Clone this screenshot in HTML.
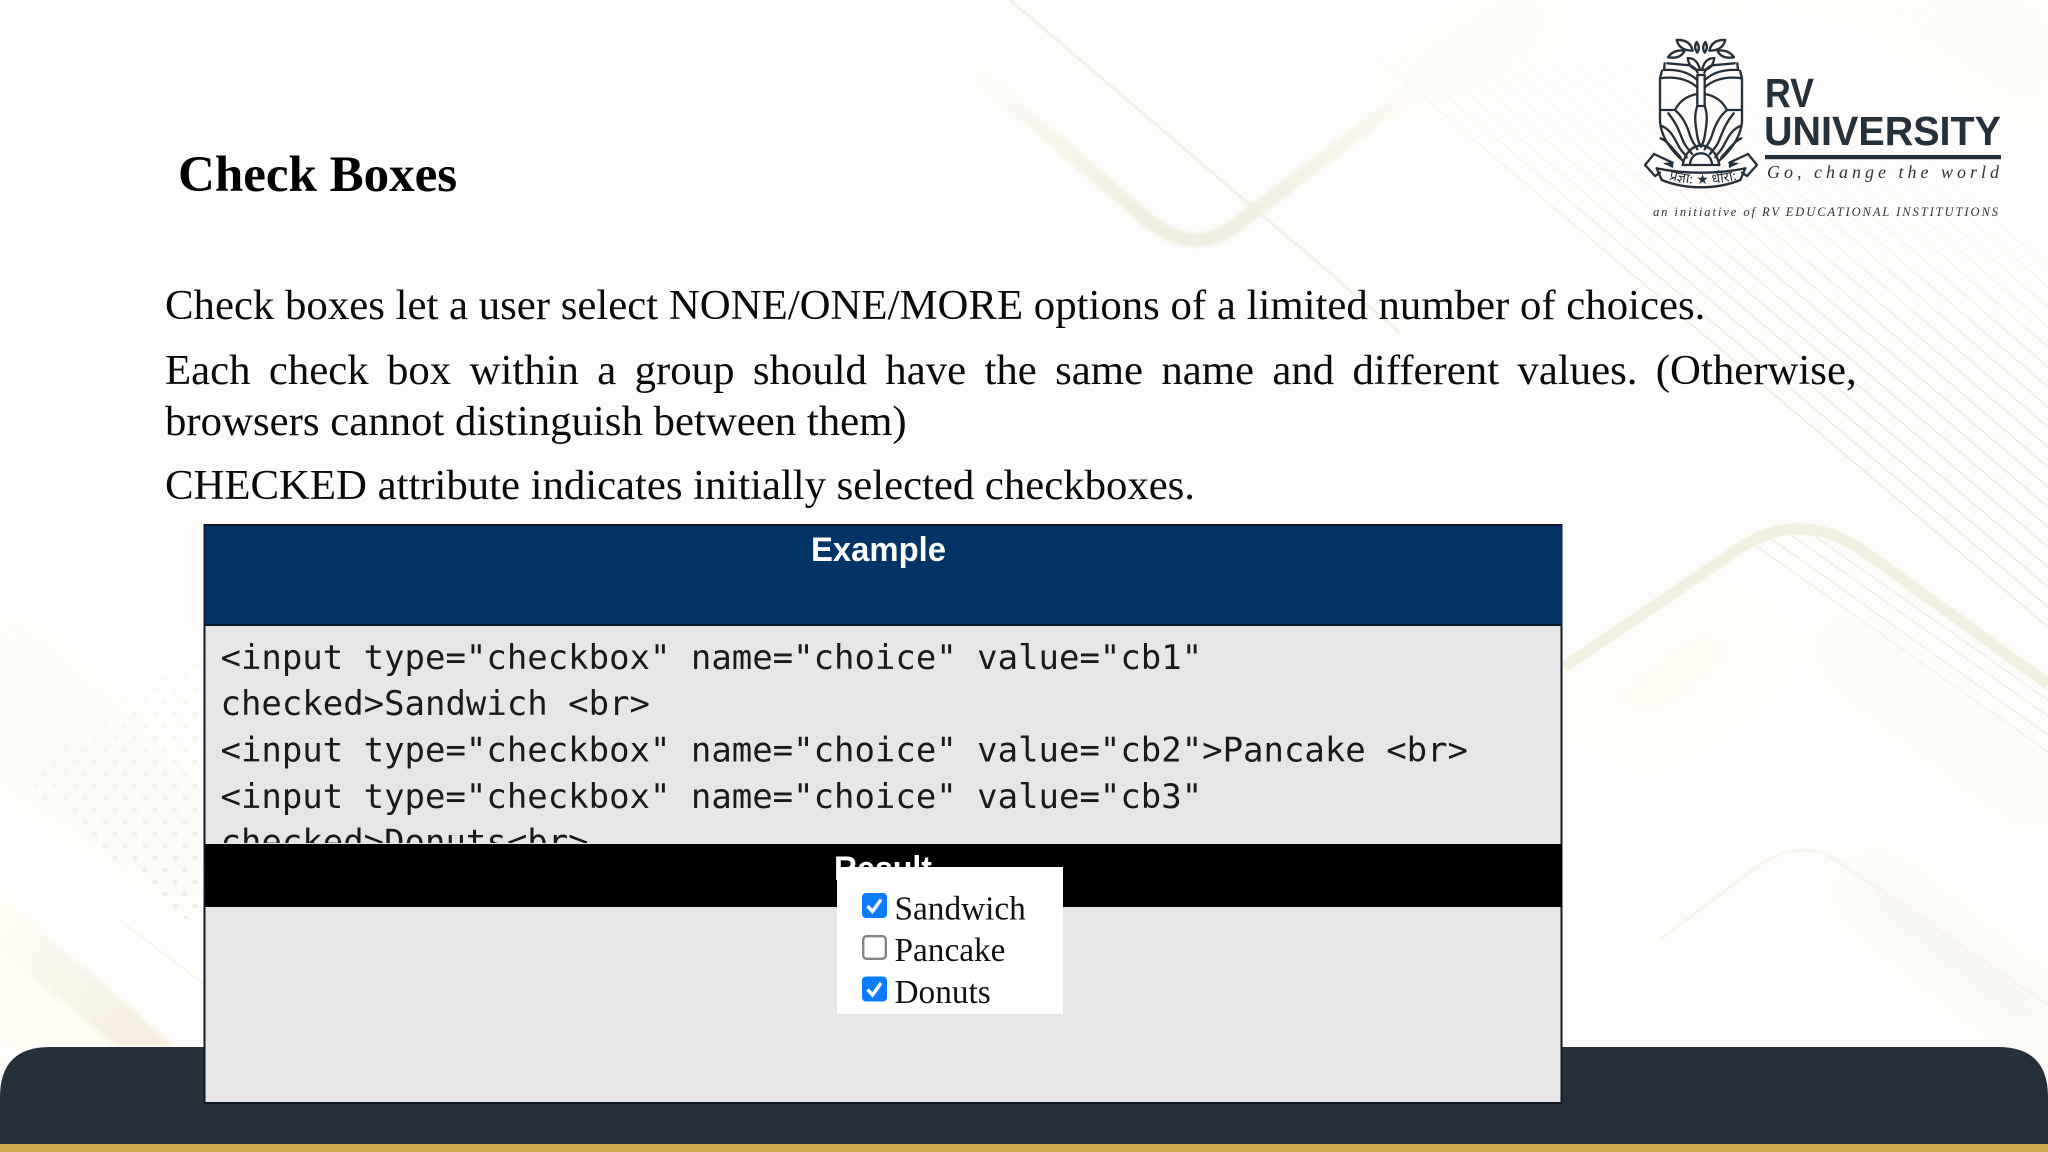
<!DOCTYPE html>
<html lang="en"><head><meta charset="utf-8"><title>Check Boxes</title>
<style>
html,body{margin:0;padding:0;background:#fdfcfa;}
svg{display:block;position:absolute;left:0;top:0;}
.b{font-family:"Liberation Serif",serif;font-size:42.8px;fill:#0a0a0a;}
.m{font-family:"DejaVu Sans Mono",monospace;font-size:33.97px;fill:#1a1a1a;}
.h{font-family:"Liberation Sans",sans-serif;font-weight:bold;font-size:34px;fill:#fff;}
.l{font-family:"Liberation Serif",serif;font-size:33.3px;fill:#111;}
</style></head>
<body style="width:2048px;height:1152px;overflow:hidden;position:relative">
<svg width="2048" height="1152" viewBox="0 0 2048 1152" xmlns="http://www.w3.org/2000/svg">
<defs>
<filter id="b3" x="-20%" y="-20%" width="140%" height="140%"><feGaussianBlur stdDeviation="1.8"/></filter>
<filter id="b2" x="-20%" y="-20%" width="140%" height="140%"><feGaussianBlur stdDeviation="2"/></filter>
<filter id="b1" x="-20%" y="-20%" width="140%" height="140%"><feGaussianBlur stdDeviation="0.7"/></filter>
<filter id="b20" x="-30%" y="-30%" width="160%" height="160%"><feGaussianBlur stdDeviation="22"/></filter>
<pattern id="dots" x="0" y="0" width="20" height="24" patternUnits="userSpaceOnUse">
<circle cx="5" cy="6" r="2.5" fill="#f1eee3"/><circle cx="15" cy="18" r="2.5" fill="#f1eee3"/>
</pattern>
<linearGradient id="fadeDots" gradientUnits="userSpaceOnUse" x1="60" y1="670" x2="170" y2="890"><stop offset="0" stop-color="#fff" stop-opacity="0"/><stop offset=".9" stop-color="#fff" stop-opacity="1"/></linearGradient>
<mask id="dm"><path d="M20 780 L210 640 V935 H205 Z" fill="url(#fadeDots)"/></mask>
<clipPath id="codeclip"><rect x="207" y="627" width="1354" height="216"/></clipPath>
<linearGradient id="fadeLines" gradientUnits="userSpaceOnUse" x1="1700" y1="60" x2="1640" y2="330"><stop offset="0" stop-color="#fff" stop-opacity="0"/><stop offset="1" stop-color="#fff" stop-opacity="1"/></linearGradient>
<mask id="lm"><path d="M1380 60H2048V780L1900 690L1640 480L1500 240Z" fill="url(#fadeLines)"/></mask>
<linearGradient id="band" gradientUnits="userSpaceOnUse" x1="20" y1="900" x2="165" y2="1047"><stop offset="0" stop-color="#f7f1e2" stop-opacity="0"/><stop offset=".8" stop-color="#f6f0e0"/><stop offset="1" stop-color="#f6f0e0"/></linearGradient>
<linearGradient id="vgrad" gradientUnits="userSpaceOnUse" x1="0" y1="70" x2="0" y2="225"><stop offset="0" stop-color="#fbf9ef" stop-opacity=".3"/><stop offset=".55" stop-color="#f7f4e8"/><stop offset="1" stop-color="#f1ede0"/></linearGradient>
</defs>

<!-- background -->
<rect width="2048" height="1152" fill="#fdfcfa"/>
<path d="M0 890 L0 1047 H130 Z" fill="#fffdf4" filter="url(#b2)"/>
<path d="M0 895 L175 1047 H118 L0 950 Z" fill="url(#band)" filter="url(#b2)"/>
<path d="M0 620 L130 740 L210 820 V900 L60 810 L0 760 Z" fill="#fbfaf5" filter="url(#b20)"/>
<rect x="0" y="640" width="210" height="300" fill="url(#dots)" mask="url(#dm)"/>
<path d="M120 920 L205 985" stroke="#f3f1ea" stroke-width="1.2" fill="none"/>
<path d="M1620 0 L2048 0 L2048 120 L1880 10 Z" fill="#fdfbf5" filter="url(#b20)"/>
<path d="M1560 700 L1700 590 L1790 650 L1650 760Z" fill="#fefcf5" filter="url(#b20)"/>

<!-- thin diagonal -->
<path d="M1010 0 L1296 244 L1400 333" stroke="#f2f0e1" stroke-width="2.6" fill="none" filter="url(#b1)"/>
<!-- thick V -->
<path d="M977 73 L1150 222 Q1198 258 1240 222 L1410 93" stroke="url(#vgrad)" stroke-width="14" fill="none" filter="url(#b3)"/>
<path d="M1410 93 L1540 10" stroke="#fbf9f0" stroke-width="24" fill="none" filter="url(#b20)"/>
<!-- fine lines -->
<g mask="url(#lm)" stroke="#ece9dc" stroke-width="1.2" fill="none">
<path d="M1380 60 L2048 627M1404 60 L2048 607M1428 60 L2048 587M1452 60 L2048 567M1476 60 L2048 547M1500 60 L2048 527M1524 60 L2048 507M1548 60 L2048 487M1572 60 L2048 467M1596 60 L2048 447M1620 60 L2048 427M1644 60 L2048 407M1668 60 L2048 387M1692 60 L2048 367M1716 60 L2048 347M1740 60 L2048 327M1764 60 L2048 307M1788 60 L2048 287M1812 60 L2048 267"/>
</g>
<!-- upper chevron -->
<path d="M1564 667 L1728 556 Q1794 505 1862 550 L2048 684" stroke="#f3efe1" stroke-width="11" fill="none" filter="url(#b1)"/>
<g stroke="#f1eee4" stroke-width="1.2" fill="none">
<path d="M1748 540 L2048 752M1763 533 L2048 735M1781 528 L2048 716M1803 528 L2048 700M1843 540 L2048 690"/>
</g>
<path d="M1840 640 L2048 800" stroke="#faf8f1" stroke-width="30" fill="none" filter="url(#b20)"/>
<!-- lower chevron -->
<path d="M1660 940 L1755 868 Q1794 840 1830 856 L2048 1005" stroke="#f6f3e9" stroke-width="2.4" fill="none" filter="url(#b1)"/>
<path d="M1860 880 L2048 1030" stroke="#f9f6ed" stroke-width="30" fill="none" filter="url(#b20)"/>

<!-- bottom bar -->
<path d="M0 1152 V1097 Q0 1047 50 1047 H1998 Q2048 1047 2048 1097 V1152 Z" fill="#25303a"/>
<rect x="0" y="1144" width="2048" height="8" fill="#cfab50"/>

<!-- title -->
<text x="178" y="191" font-family="Liberation Serif,serif" font-weight="bold" font-size="51" fill="#000">Check Boxes</text>

<!-- body -->
<text class="b" x="165" y="319">Check boxes let a user select NONE/ONE/MORE options of a limited number of choices.</text>
<text class="b" x="165" y="384" style="word-spacing:7.65px">Each check box within a group should have the same name and different values. (Otherwise,</text>
<text class="b" x="165" y="435">browsers cannot distinguish between them)</text>
<text class="b" x="165" y="499" textLength="1030">CHECKED attribute indicates initially selected checkboxes.</text>

<!-- example box -->
<rect x="204.5" y="525" width="1357" height="578" fill="#e6e6e6" stroke="#111a24" stroke-width="2"/>
<rect x="205" y="526" width="1357" height="99" fill="#003366"/>
<rect x="205" y="624" width="1357" height="2" fill="#0a1a2a"/>
<text class="h" x="811" y="561" textLength="135" lengthAdjust="spacingAndGlyphs">Example</text>
<g clip-path="url(#codeclip)">
<text class="m" x="220.5" y="669">&lt;input type="checkbox" name="choice" value="cb1"</text>
<text class="m" x="220.5" y="715">checked&gt;Sandwich &lt;br&gt;</text>
<text class="m" x="220.5" y="761.5">&lt;input type="checkbox" name="choice" value="cb2"&gt;Pancake &lt;br&gt;</text>
<text class="m" x="220.5" y="808">&lt;input type="checkbox" name="choice" value="cb3"</text>
<text class="m" x="220.5" y="853.5">checked&gt;Donuts&lt;br&gt;</text>
</g>
<rect x="205" y="844" width="1357" height="63" fill="#000"/>
<text class="h" x="834" y="880" textLength="98" lengthAdjust="spacingAndGlyphs">Result</text>
<rect x="837" y="867" width="226" height="147" fill="#fff"/>

<!-- checkboxes -->
<rect x="862" y="893" width="25" height="25" rx="4" fill="#0b7cff"/>
<path d="M867.5 906 L872.5 911.5 L881 899.5" fill="none" stroke="#fff" stroke-width="3.4"/>
<rect x="863.2" y="936.2" width="22.6" height="22.6" rx="3.5" fill="#fff" stroke="#858585" stroke-width="2.4"/>
<rect x="862" y="976.5" width="25" height="25" rx="4" fill="#0b7cff"/>
<path d="M867.5 989.5 L872.5 995 L881 983" fill="none" stroke="#fff" stroke-width="3.4"/>
<text class="l" x="894.5" y="919.5">Sandwich</text>
<text class="l" x="894.5" y="961">Pancake</text>
<text class="l" x="894.5" y="1003">Donuts</text>

<!-- logo crest -->
<g transform="translate(1640 30) scale(.33333)" fill="none" stroke="#25303a" stroke-width="7" stroke-linejoin="round" stroke-linecap="round">
<g id="half">
<path d="M110 30 Q150 28 158 62 Q118 62 110 30Z"/>
<path d="M170 36 Q182 52 172 68 Q160 52 170 36Z"/>
<path d="M84 82 Q100 58 134 62 Q122 88 84 82Z"/>
<path d="M143 84 Q172 84 180 120 Q148 120 143 84Z"/>
<path d="M82 100 L150 106 Q166 112 173 128"/>
<path d="M74 100 L72 120 Q135 116 172 150"/>
<path d="M66 122 L60 145 Q130 135 172 172"/>
<path d="M60 145 V275 Q65 335 128 392"/>
<path d="M60 240 H105 Q125 200 172 192"/>
<path d="M105 240 C130 262 140 285 148 310 C155 335 165 345 172 358"/>
<path d="M85 250 C110 280 118 305 128 330 C135 350 150 362 156 372"/>
<path d="M65 288 C95 300 105 330 118 352 C125 365 135 372 140 382"/>
<path d="M62 325 C85 335 100 360 122 382"/>
<path d="M172 228 C160 260 168 290 172 320 C175 335 180 345 183 350"/>
<path d="M128 405 C135 365 160 348 183 346"/>
<path d="M150 402 C152 382 165 370 183 370"/>
<path d="M42 372 L15 405 L45 438 L60 428"/>
<path d="M42 372 L98 398"/>
<path d="M72 400 L98 398 L98 412 Z" fill="#25303a" stroke-width="3"/>
<path d="M50 415 L65 450 Q120 472 183 472"/>
<path d="M50 415 Q115 428 183 428"/>
</g>
<use href="#half" transform="translate(366 0) scale(-1 1)"/>
<rect x="172" y="135" width="22" height="93"/>
<path d="M128 405 H238"/>
</g>
<path id="banp" d="M1664 178 Q1703 190 1742 178" fill="none" stroke="none"/>
<text font-family="Liberation Serif,DejaVu Serif,serif" font-size="14" fill="#25303a"><textPath href="#banp" startOffset="50%" text-anchor="middle">प्रज्ञा: ★ धीरा:</textPath></text>

<!-- logo text -->
<g fill="#25303a" font-family="Liberation Sans,sans-serif" font-weight="bold">
<text x="1765" y="107" font-size="41" textLength="49" lengthAdjust="spacingAndGlyphs">RV</text>
<text x="1764" y="145" font-size="40.5" textLength="237" lengthAdjust="spacingAndGlyphs">UNIVERSITY</text>
</g>
<rect x="1765" y="155" width="236" height="4.2" fill="#25303a"/>
<text x="1767" y="178" font-family="Liberation Serif,serif" font-style="italic" font-size="18" fill="#2c3640" textLength="232">Go, change the world</text>
<text x="1653" y="216" font-family="Liberation Serif,serif" font-style="italic" font-size="12.5" fill="#2c3640" textLength="345">an initiative of RV EDUCATIONAL INSTITUTIONS</text>
</svg>
</body></html>
